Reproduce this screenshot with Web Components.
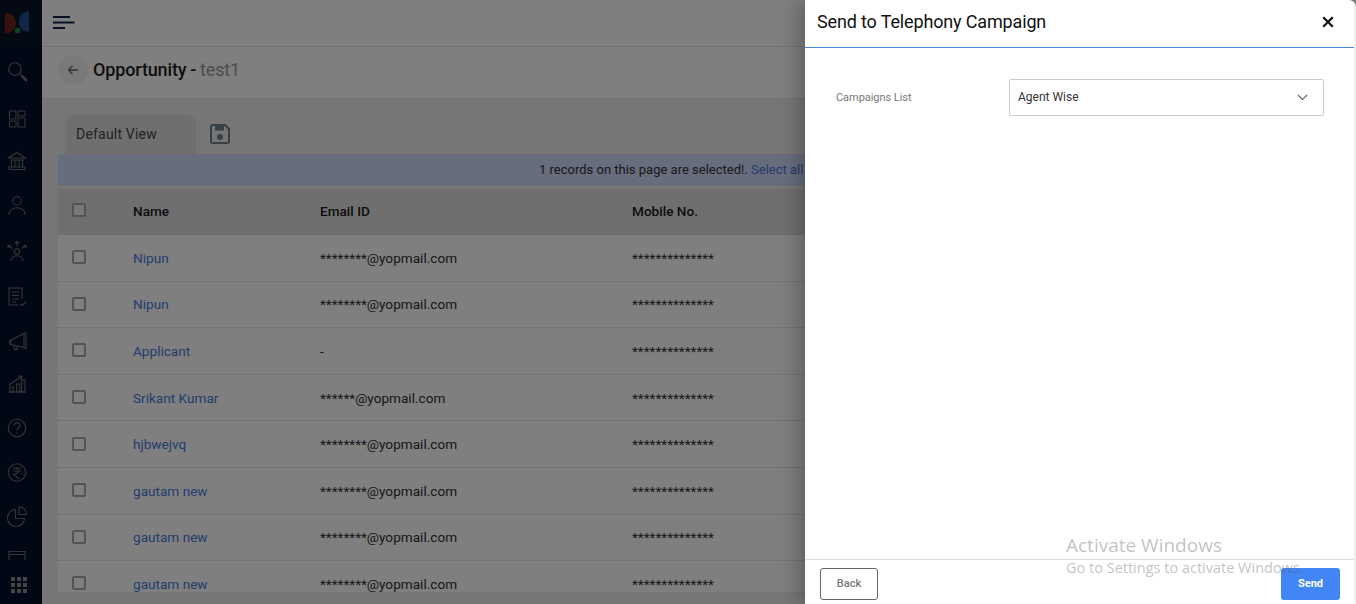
<!DOCTYPE html>
<html lang="en">
<head>
<meta charset="utf-8">
<title>Opportunity - test1</title>
<style>
  html, body { margin: 0; height: 100%; overflow: hidden; }
  body { font-family: Roboto, "Liberation Sans", sans-serif; }
</style>
</head>
<body>
<app-shell>
  <app-sidebar slot="sidebar"></app-sidebar>
  <app-topbar slot="main"></app-topbar>
  <page-header slot="main" title="Opportunity -" sub="test1"></page-header>
  <view-tabs slot="main"></view-tabs>
  <select-banner slot="main"></select-banner>
  <record-table slot="main"></record-table>
  <side-drawer slot="drawer" heading="Send to Telephony Campaign">
    <form-select label="Campaigns List" value="Agent Wise"></form-select>
    <action-button slot="footer" kind="outline">Back</action-button>
    <action-button slot="footer" kind="primary">Send</action-button>
  </side-drawer>
  <windows-mark slot="mark"></windows-mark>
</app-shell>

<script>
// dy nudges each glyph inside its 44px nav slot, the original spacing is not even
const navIcons = [
  {dy: 0, d: `<circle cx="10" cy="10" r="6.300"/><path d="M15 15l2 2"/><path d="M17.500 17.500l3.500 3.500" stroke-width="2.600" stroke-linecap="round"/>`},
  {dy: 0, d: `<rect x="4.500" y="4" width="6.500" height="8" rx=".8"/><rect x="13" y="4" width="7" height="5" rx=".8"/><rect x="4.500" y="14" width="6.500" height="6" rx=".8"/><rect x="13" y="11" width="7" height="9" rx=".8"/>`},
  {dy: -2.500, d: `<path d="M3.500 9.500L12 4l8.500 5.500z"/><path d="M5 11.500h14M6.500 11.500v7M10 11.500v7M14 11.500v7M17.500 11.500v7"/><path d="M4 18.500h16v2.500H4z"/>`},
  {dy: -1, d: `<circle cx="12" cy="7" r="4.200"/><path d="M4 21c0-4.600 3.400-7.200 8-7.200s8 2.600 8 7.200"/>`},
  {dy: 1, d: `<circle cx="12" cy="11.500" r="2.600"/><path d="M6 21c0-3.200 2.600-5.200 6-5.200s6 2 6 5.200"/><path d="M12 6.500V1.500M10 3.500l2-2 2 2"/><path d="M7.500 8.500L3 5.500M3 8V5.500h2.700"/><path d="M16.500 8.500L21 5.500M21 8V5.500h-2.700"/>`},
  {dy: 2, d: `<path d="M17 14V3H4v17h9"/><path d="M7 7h7M7 10.500h7M7 14h7M7 17h4"/><path d="M15 19l2 1.500 4-3.500"/>`},
  {dy: 2, d: `<path d="M6 11L19 4.500v14L6 15.500z"/><path d="M19 4.500l2-.5v15.500l-2-1"/><path d="M6 11c-1.200.3-1.500 1-1.500 2.200s.3 2 1.500 2.300"/><path d="M8.500 16.500l1.500 4.500 2.500-.7-1-3"/>`},
  {dy: 2, d: `<path d="M3.500 19h17.500"/><rect x="5" y="14" width="3.300" height="5"/><rect x="11.500" y="11" width="3.300" height="8"/><rect x="16.700" y="7" width="3.300" height="12"/><path d="M4 12L16.500 3.500M13 3.200l4-.2-1 3.800"/>`},
  {dy: 1, d: `<circle cx="12" cy="12" r="8.700"/><path d="M9.200 9.500c0-1.700 1.200-2.900 2.900-2.900s2.900 1.100 2.900 2.700c0 2.400-3 2.500-3 5"/><path d="M12 16.200v1.400"/>`},
  {dy: 1.500, d: `<circle cx="12" cy="12" r="8.700"/><path d="M8 7.500h8.500M8 10.500h8.500M9 7.500c5.500-.5 6.500 6-.5 6.200l6 5"/>`},
  {dy: 1.500, d: `<path d="M10.500 5a8.500 8.500 0 1 0 9 9h-9z"/><path d="M14 2.500a7.500 7.500 0 0 1 7.500 7.500H14z"/>`},
  {dy: -2.500, d: `<path d="M4 22V7h16v15M4 10h16"/>`}
];

class AppShell extends HTMLElement {
  constructor() {
    super();
    this.attachShadow({mode: 'open'});
    this.shadowRoot.innerHTML = `
      <style>
        :host { display: flex; height: 100vh; position: relative; overflow: hidden; background: #ececec; }
        .main { flex: 1; min-width: 0; display: flex; flex-direction: column; }
        .scrim { position: absolute; inset: 0; background: rgba(0, 0, 0, .5); }
        .drawer { position: absolute; top: 0; right: 0; bottom: 0; width: 551px; }
        .mark { position: absolute; left: 1066px; top: 533px; pointer-events: none; }
      </style>
      <slot name="sidebar"></slot>
      <div class="main"><slot name="main"></slot></div>
      <div class="scrim"></div>
      <div class="drawer"><slot name="drawer"></slot></div>
      <div class="mark"><slot name="mark"></slot></div>
    `;
  }
}

class AppSidebar extends HTMLElement {
  constructor() {
    super();
    this.attachShadow({mode: 'open'});
    const items = navIcons.map(icon => `
      <div class="item">
        <svg style="transform: translateY(${icon.dy}px)" viewBox="0 0 24 24" width="24" height="24" fill="none" stroke="#6c6c6c" stroke-width="1.100">${icon.d}</svg>
      </div>`).join('');
    const dots = Array.from({length: 9}, () => '<i></i>').join('');
    this.shadowRoot.innerHTML = `
      <style>
        :host { display: flex; flex-direction: column; flex: 0 0 42px; height: 100%; background: #050f2a; }
        .logo { flex: 0 0 46px; display: flex; align-items: flex-start; background: #081329; }
        .logo svg { display: block; }
        .nav { flex: 1; min-height: 0; overflow: hidden; padding: 3px 8px 0 0; }
        .item { height: 44px; display: flex; align-items: center; justify-content: center; }
        .item:first-child { margin-bottom: 4px; }
        .apps { flex: 0 0 44px; padding: 17px 0 0 11px; box-sizing: border-box; display: grid; grid-template-columns: repeat(3, 4.400px); grid-auto-rows: 4.400px; gap: 1.400px; }
        .apps i { background: #8a8a8a; }
      </style>
      <div class="logo">
        <svg width="42" height="46" viewBox="0 0 42 46">
          <path d="M5 13c7 0 11 5 11 10.500S11 33 5 34z" fill="#6e2418"/>
          <path d="M29 11v21c-6 0-10-4-10-10.500S23 12 29 11z" fill="#1e4d90"/>
          <circle cx="17.500" cy="30.500" r="2.700" fill="#188a44"/>
        </svg>
      </div>
      <div class="nav">${items}</div>
      <div class="apps">${dots}</div>
    `;
  }
}

class AppTopbar extends HTMLElement {
  constructor() {
    super();
    this.attachShadow({mode: 'open'});
    this.shadowRoot.innerHTML = `
      <style>
        :host { display: flex; align-items: center; flex: 0 0 47px; box-sizing: border-box; padding-left: 11px; background: #fff; border-bottom: 1px solid #e4e4e4; }
        svg { display: block; }
      </style>
      <svg width="22" height="16" viewBox="0 0 22 16" fill="none" stroke="#12224a" stroke-width="2">
        <path d="M0 2h17M0 7.500h21.500M0 13h12"/>
      </svg>
    `;
  }
}

class PageHeader extends HTMLElement {
  constructor() {
    super();
    this.attachShadow({mode: 'open'});
  }
  connectedCallback() {
    this.shadowRoot.innerHTML = `
      <style>
        :host { display: flex; align-items: center; gap: 5px; flex: 0 0 52px; box-sizing: border-box; padding: 0 0 5px 16px; background: #fff; border-bottom: 1px solid #e2e2e2; }
        .back { width: 30px; height: 30px; border-radius: 50%; background: #f3f3f3; display: flex; align-items: center; justify-content: center; }
        h1 { margin: 0 0 2px; font-size: 18px; font-weight: 500; letter-spacing: -.15px; word-spacing: -.5px; color: #1c1c1c; }
        span { font-weight: 400; color: #999; }
      </style>
      <div class="back">
        <svg width="12" height="12" viewBox="0 0 12 12" fill="none" stroke="#666" stroke-width="1.300"><path d="M11 6H1.500M5.500 2L1.500 6l4 4"/></svg>
      </div>
      <h1>${this.getAttribute('title')} <span>${this.getAttribute('sub')}</span></h1>
    `;
  }
}

class ViewTabs extends HTMLElement {
  constructor() {
    super();
    this.attachShadow({mode: 'open'});
    this.shadowRoot.innerHTML = `
      <style>
        :host { display: flex; align-items: flex-end; flex: 0 0 auto; padding: 15px 0 0 24px; }
        .tab { box-sizing: border-box; width: 130px; height: 40px; padding: 12px 0 0 10px; border-radius: 9px 9px 0 0; background: #dfdfdf; font-size: 14px; letter-spacing: .2px; color: #444; }
        svg { display: block; margin: 0 0 10px 14px; }
      </style>
      <div class="tab">Default View</div>
      <svg width="20" height="20" viewBox="0 0 20 20">
        <path d="M3 1h12l4 4v12a2 2 0 0 1-2 2H3a2 2 0 0 1-2-2V3a2 2 0 0 1 2-2z" fill="none" stroke="#6f7c88" stroke-width="2"/>
        <path d="M5 2h9v4.500H5z" fill="#6f7c88"/>
        <circle cx="10" cy="13" r="3" fill="#6f7c88"/>
      </svg>
    `;
  }
}

class SelectBanner extends HTMLElement {
  constructor() {
    super();
    this.attachShadow({mode: 'open'});
    this.shadowRoot.innerHTML = `
      <style>
        :host { display: block; flex: 0 0 auto; box-sizing: border-box; height: 32px; margin: 0 0 3px 16px; padding: 8px 0 0 481px; border-radius: 3px 0 0 3px; background: #cfdafb; font-size: 13px; line-height: 16px; color: #333; white-space: nowrap; }
        a { color: #4a78dc; }
      </style>
      1 records on this page are selected!. <a>Select all</a>
    `;
  }
}

class RecordTable extends HTMLElement {
  #rows = [
    ['Nipun', '********@yopmail.com'],
    ['Nipun', '********@yopmail.com'],
    ['Applicant', '-'],
    ['Srikant Kumar', '******@yopmail.com'],
    ['hjbwejvq', '********@yopmail.com'],
    ['gautam new', '********@yopmail.com'],
    ['gautam new', '********@yopmail.com'],
    ['gautam new', '********@yopmail.com']
  ];

  constructor() {
    super();
    this.attachShadow({mode: 'open'});
    this.render();
  }

  render() {
    this.shadowRoot.innerHTML = `
      <style>
        :host { display: block; flex: 0 0 403px; margin-left: 16px; overflow: hidden; background: #fff; font-size: 13.600px; color: #2f2f2f; }
        .row { display: grid; grid-template-columns: 75px 187px 312px 1fr; align-items: center; box-sizing: border-box; height: 46.600px; border-bottom: 1px solid #e6e6e6; }
        .row.head { height: 46px; padding-bottom: 2px; background: #dedede; border: 0; font-weight: 500; color: #1a1a1a; }
        .box { box-sizing: border-box; width: 14px; height: 14px; margin: -1px 0 0 14px; border: 2px solid #a8a8a8; border-radius: 2px; background: #fff; }
        .head .box { margin-top: -3px; background: #f2f2f2; }
        a { color: #4a78dc; }
      </style>
      <div class="row head">
        <div class="box"></div><div>Name</div><div>Email ID</div><div>Mobile No.</div>
      </div>
      ${this.#rows.map(row => `
        <div class="row">
          <div class="box"></div>
          <div><a>${row[0]}</a></div>
          <div>${row[1]}</div>
          <div>**************</div>
        </div>
      `).join('')}
    `;
  }
}

class SideDrawer extends HTMLElement {
  constructor() {
    super();
    this.attachShadow({mode: 'open'});
  }
  connectedCallback() {
    this.shadowRoot.innerHTML = `
      <style>
        :host { display: flex; flex-direction: column; box-sizing: border-box; height: 100%; background: #fff; border-radius: 0 7px 0 0; margin-right: 2px; box-shadow: -8px 0 18px rgba(0, 0, 0, .22), 2px 0 0 #f7f7f7; }
        header { flex: 0 0 48px; box-sizing: border-box; display: flex; align-items: center; justify-content: space-between; padding: 0 20px 4px 12px; border-bottom: 1px solid #4a86e0; }
        h2 { margin: 0; font-size: 18px; font-weight: 400; letter-spacing: -.15px; color: #111; }
        .body { flex: 1; padding: 31px 30px 0 31px; }
        footer { display: flex; justify-content: space-between; box-sizing: border-box; height: 45px; padding: 8px 14px 0 15px; border-top: 1px solid #ddd; }
        svg { display: block; }
      </style>
      <header>
        <h2>${this.getAttribute('heading')}</h2>
        <svg width="12" height="12" viewBox="0 0 12 12" fill="none" stroke="#111" stroke-width="2.300"><path d="M1.200 1.200l9.600 9.600M10.800 1.200l-9.600 9.600"/></svg>
      </header>
      <div class="body"><slot></slot></div>
      <footer><slot name="footer"></slot></footer>
    `;
  }
}

class FormSelect extends HTMLElement {
  constructor() {
    super();
    this.attachShadow({mode: 'open'});
  }
  connectedCallback() {
    this.shadowRoot.innerHTML = `
      <style>
        :host { display: grid; grid-template-columns: 173px 315px; align-items: center; font-size: 12px; }
        label { font-size: 11px; letter-spacing: -.05px; color: #777; }
        .field { box-sizing: border-box; height: 37px; display: flex; align-items: center; justify-content: space-between; padding: 0 15px 2px 8px; border: 1px solid #ccc; border-radius: 2px; color: #333; }
        svg { display: block; margin-top: 2px; }
      </style>
      <label>${this.getAttribute('label')}</label>
      <div class="field">
        <span>${this.getAttribute('value')}</span>
        <svg width="11" height="7" viewBox="0 0 11 7" fill="none" stroke="#666" stroke-width="1.100"><path d="M1 1l4.500 4.500L10 1"/></svg>
      </div>
    `;
  }
}

class ActionButton extends HTMLElement {
  constructor() {
    super();
    this.attachShadow({mode: 'open'});
    this.shadowRoot.innerHTML = `
      <style>
        :host { display: flex; align-items: center; justify-content: center; box-sizing: border-box; width: 58px; height: 32px; padding-bottom: 1px; border-radius: 3px; font-size: 11px; font-weight: 500; }
        :host([kind="outline"]) { border: 1px solid #666; color: #777; background: #fff; }
        :host([kind="primary"]) { width: 59px; background: #4285f4; color: #fff; font-weight: 700; }
      </style>
      <slot></slot>
    `;
  }
}

class WindowsMark extends HTMLElement {
  constructor() {
    super();
    this.attachShadow({mode: 'open'});
    this.shadowRoot.innerHTML = `
      <style>
        :host { display: block; font-family: "Open Sans", "Noto Sans", sans-serif; color: rgba(90, 90, 90, .38); white-space: nowrap; }
        div { font-size: 19px; line-height: 25px; }
        p { margin: 0; font-size: 14.500px; line-height: 20px; }
      </style>
      <div>Activate Windows</div>
      <p>Go to Settings to activate Windows.</p>
    `;
  }
}

customElements.define('app-shell', AppShell);
customElements.define('app-sidebar', AppSidebar);
customElements.define('app-topbar', AppTopbar);
customElements.define('page-header', PageHeader);
customElements.define('view-tabs', ViewTabs);
customElements.define('select-banner', SelectBanner);
customElements.define('record-table', RecordTable);
customElements.define('side-drawer', SideDrawer);
customElements.define('form-select', FormSelect);
customElements.define('action-button', ActionButton);
customElements.define('windows-mark', WindowsMark);
</script>
</body>
</html>
